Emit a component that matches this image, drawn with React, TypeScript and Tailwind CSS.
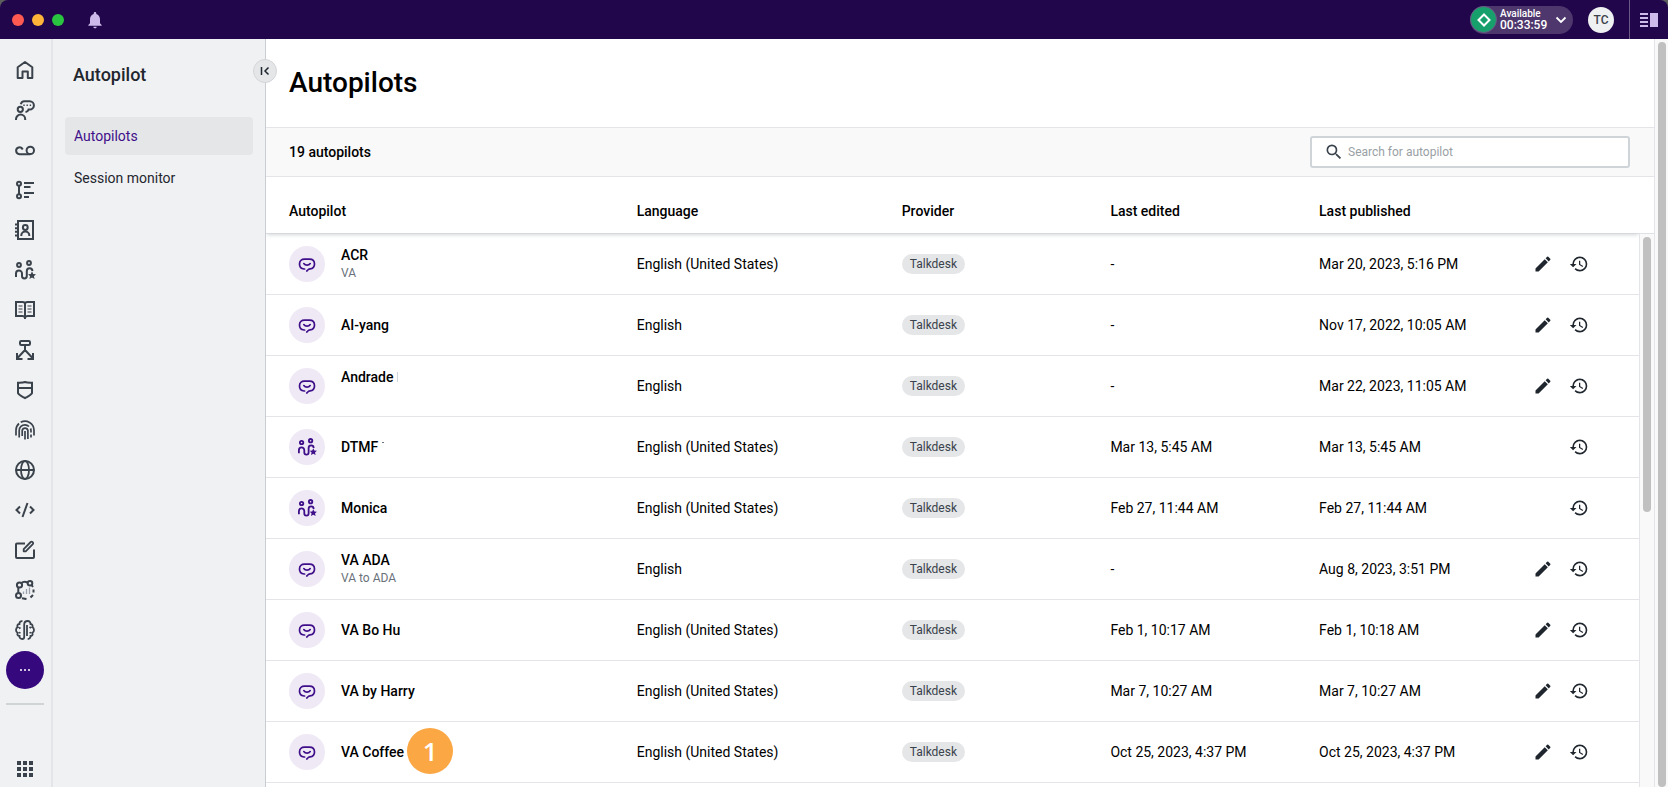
import type { ReactNode } from "react";
import { MdApps, MdEdit, MdHistory, MdNotifications, MdSearch } from "react-icons/md";

type Row = {
  name: string;
  sub?: string;
  kind: "va" | "trainer";
  language: string;
  edited: string;
  published: string;
  editable: boolean;
  trail?: ReactNode;
};

function StrokeIcon({ children, className = "size-5" }: { children: ReactNode; className?: string }) {
  return (
    <svg viewBox="0 0 20 20" className={className} fill="none" stroke="currentColor" strokeWidth="2" aria-hidden="true">
      {children}
    </svg>
  );
}

function TrainerIcon({ className }: { className?: string }) {
  return (
    <StrokeIcon className={className}>
      <circle cx="4" cy="5" r="1.900" />
      <circle cx="14" cy="3" r="1.900" />
      <path d="M1 17v-3.500a3 3 0 0 1 6 0V16a2.400 2.400 0 0 0 4.800 0v-5a2.800 2.800 0 0 1 5.600 0" />
      <path d="m17 11.300 1.200 2.700 2.800.3-2.100 1.900.7 2.800-2.600-1.500-2.600 1.500.7-2.800-2.100-1.900 2.800-.3z" fill="currentColor" stroke="none" />
    </StrokeIcon>
  );
}

function AssistantIcon() {
  return (
    <svg viewBox="0 0 18 16" className="h-4 w-[18px]" fill="none" stroke="currentColor" strokeWidth="1.700" strokeLinecap="round" aria-hidden="true">
      <path d="M6.600 13H6C3.200 12.800 1.500 11 1.500 8c0-3.200 2.200-4.900 5-4.900h5c2.800 0 5 1.700 5 4.900 0 2.800-1.900 4.600-4.500 4.900-1.700.2-2 1-3.200 2.100" />
      <path d="M5.800 7.600c1.500 2.100 4.900 2.100 6.400 0" />
    </svg>
  );
}

const railItems: { label: string; icon: ReactNode }[] = [
  { label: "Home", icon: <StrokeIcon><path d="M2.700 18V7.200L10 2l7.300 5.200V18h-4.500v-6.500H7.500V18z" strokeLinejoin="round" /></StrokeIcon> },
  {
    label: "Conversations",
    icon: (
      <StrokeIcon>
        <circle cx="5.300" cy="9.300" r="2.600" />
        <path d="M1 20v-.8a4.600 4.600 0 0 1 9.200 0v.8M5.800 4.300C6.200 2.400 7.500 1.200 9.300 1.200h5.400a4.200 4.200 0 0 1 0 8.400h-1.200c-.3 1.300-1.200 2.100-3 2.300" />
        <path d="M8.300 5.200h1.400M11.500 5.200h1.400M14.700 5.200h1.400" strokeWidth="1.500" />
      </StrokeIcon>
    ),
  },
  { label: "Voicemail", icon: <StrokeIcon><path d="M7.700 9.500a3.400 3.400 0 1 0-3.200 4.700h10.800" /><circle cx="15.300" cy="10.400" r="3.700" /></StrokeIcon> },
  { label: "Activities", icon: <StrokeIcon><circle cx="4" cy="3.700" r="2" /><circle cx="4" cy="16.300" r="2" /><path d="M4 5.700v8.600M9 3h10M9 7h6.500M9 13h10M9 17h5" /></StrokeIcon> },
  { label: "Contacts", icon: <StrokeIcon><path d="M3 1h15v18H3zM0 4.500h3M0 8.200h3M0 11.800h3M0 15.500h3M6.300 16v-.5a4 4 0 0 1 8 0v.5" /><circle cx="10.300" cy="7.500" r="2.400" /></StrokeIcon> },
  { label: "Agents", icon: <TrainerIcon className="size-5 overflow-visible" /> },
  {
    label: "Knowledge",
    icon: (
      <StrokeIcon>
        <path d="M10 17.500c-.7-1-1.500-1.500-2.500-1.500H1V2h6.500c1.300 0 2.500.8 2.500 2 0-1.200 1.200-2 2.500-2H19v14h-6.500c-1 0-1.800.5-2.500 1.500zM10 4v15" />
        <path d="M3.500 6h4M3.500 9h4M3.500 12h4M12.500 6h4M12.500 9h4M12.500 12h4" strokeWidth="1.200" />
      </StrokeIcon>
    ),
  },
  { label: "Routing", icon: <StrokeIcon><rect x="5" y="1" width="10" height="4" rx="1.200" /><path d="M10 5v5L2.500 18M10 10l7.500 8M2 13v6h5.500M18 13v6h-5.500" /></StrokeIcon> },
  { label: "Security", icon: <StrokeIcon><path d="M3 2.800c3-.2 5-.2 7-.8 2 .6 4 .6 7 .8v10.400c-1 2.200-4 3.200-7 4.800-3-1.600-6-2.600-7-4.800zM3 8h14" /></StrokeIcon> },
  {
    label: "Identity",
    icon: (
      <StrokeIcon>
        <path d="M1 15.500V10a9 9 0 0 1 3-6.500M5.700 2.300A9 9 0 0 1 19 10v5.500M4.200 17.500V10.500A5.800 5.800 0 0 1 10 4.800a5.800 5.800 0 0 1 4 1.700M15.500 8.500c.4.800.5 1.500.5 2.500v1.500M16 14.500v3M7.200 16v-5.500a2.900 2.900 0 0 1 5.700 0V19M10 11v8.500" strokeWidth="1.700" />
      </StrokeIcon>
    ),
  },
  { label: "Web", icon: <StrokeIcon><circle cx="10" cy="10" r="9" /><ellipse cx="10" cy="10" rx="4" ry="9" strokeWidth="1.800" /><path d="M1 10h18" /></StrokeIcon> },
  { label: "Developers", icon: <StrokeIcon><path d="M5 6.500 1.500 10 5 13.500M15 6.500l3.500 3.500-3.500 3.500M12.500 3l-5 14" /></StrokeIcon> },
  { label: "Compose", icon: <StrokeIcon><path d="M10 3.500H2a1 1 0 0 0-1 1V17a1 1 0 0 0 1 1h16a1 1 0 0 0 1-1V9.500" /><path d="m8.700 9.200 7-7.200c1.200-1.200 3.300.900 2.100 2.100l-7.100 7.200H8.700z" strokeWidth="1.800" strokeLinejoin="round" /></StrokeIcon> },
  {
    label: "Journeys",
    icon: (
      <StrokeIcon>
        <circle cx="4.500" cy="5" r="2.600" />
        <circle cx="15" cy="3.300" r="2.300" />
        <circle cx="3.500" cy="15.500" r="2.500" />
        <path d="M6.500 3C8 1.500 10.500 1.500 12.500 2.500M3.300 7.500V12.500M16.500 5l1.500 2M7 18.300l4.500.8M18.500 9.500v3M18 15l-2.500 2.500" />
        <path d="M8.500 14v-2.500M11.500 14V9M14.500 14V7.500" strokeWidth="1.300" className="text-gray-400" />
      </StrokeIcon>
    ),
  },
  {
    label: "Intelligence",
    icon: (
      <StrokeIcon>
        <path d="M7.500 1.200C5.500 1 4.300 2 4.500 4 2.300 4.200 1.800 5.700 2.700 7.200 1.300 7.800 1 9 1 10s.3 2.200 1.700 2.800C1.800 14.500 2.700 16 4.500 16c-.1 2 1 3 2.700 3 1.300 0 2-.8 2-2V4.500C9.200 2.300 10.500 1 12.700 1c1.800 0 2.900 1.200 2.800 3 1.800.2 2.700 1.700 1.800 3.200 1.400.6 1.700 1.800 1.700 2.800s-.3 2.200-1.700 2.800c.9 1.700 0 3.200-1.800 3.200.1 1.800-1 3-2.800 3M12 5v11M4 8.500l1.500-1M4 12.500l1.500.5M16 8l-1.500-1M16 12.500l-1.500.5" strokeWidth="1.800" />
      </StrokeIcon>
    ),
  },
];

const rows: Row[] = [
  { name: "ACR", sub: "VA", kind: "va", language: "English (United States)", edited: "-", published: "Mar 20, 2023, 5:16 PM", editable: true },
  { name: "AI-yang", kind: "va", language: "English", edited: "-", published: "Nov 17, 2022, 10:05 AM", editable: true },
  { name: "Andrade", sub: "\u00a0", kind: "va", language: "English", edited: "-", published: "Mar 22, 2023, 11:05 AM", editable: true, trail: <span className="ml-1 h-2.5 w-px bg-gray-300" /> },
  { name: "DTMF", kind: "trainer", language: "English (United States)", edited: "Mar 13, 5:45 AM", published: "Mar 13, 5:45 AM", editable: false, trail: <span className="mb-2 ml-1 h-px w-0.5 bg-gray-500" /> },
  { name: "Monica", kind: "trainer", language: "English (United States)", edited: "Feb 27, 11:44 AM", published: "Feb 27, 11:44 AM", editable: false },
  { name: "VA ADA", sub: "VA to ADA", kind: "va", language: "English", edited: "-", published: "Aug 8, 2023, 3:51 PM", editable: true },
  { name: "VA Bo Hu", kind: "va", language: "English (United States)", edited: "Feb 1, 10:17 AM", published: "Feb 1, 10:18 AM", editable: true },
  { name: "VA by Harry", kind: "va", language: "English (United States)", edited: "Mar 7, 10:27 AM", published: "Mar 7, 10:27 AM", editable: true },
  {
    name: "VA Coffee", kind: "va", language: "English (United States)", edited: "Oct 25, 2023, 4:37 PM", published: "Oct 25, 2023, 4:37 PM", editable: true,
    trail: <span className="absolute bottom-1/2 left-full ml-[3px] flex size-[46px] translate-y-[22px] items-center justify-center rounded-full bg-[#fba744] font-['Open_Sans',sans-serif] text-[26px] font-semibold text-white">1</span>,
  },
];

function TopBar() {
  return (
    <header className="flex h-[39px] shrink-0 items-center rounded-t-lg bg-[#22064b] pl-3 text-white">
      <div className="flex gap-2">
        <span className="size-3 rounded-full bg-[#ff5a52]" />
        <span className="size-3 rounded-full bg-[#fdb438]" />
        <span className="size-3 rounded-full bg-[#29c440]" />
      </div>
      <button type="button" aria-label="Notifications" className="ml-[21px] text-[#cdbaea]">
        <MdNotifications className="size-5" />
      </button>
      <button type="button" className="ml-auto flex h-7 w-[103px] items-center rounded-full bg-[#4d376d] pr-1.5">
        <span className="flex size-[27px] shrink-0 items-center justify-center rounded-full border border-[#6b5a86] bg-[#17a06b]">
          <svg viewBox="0 0 14 14" className="size-3.5" fill="none" stroke="currentColor" strokeWidth="2" aria-hidden="true">
            <path d="M7 1.500 12.500 7 7 12.500 1.500 7z" />
          </svg>
        </span>
        <span className="ml-[3px] flex flex-col text-left font-medium">
          <span className="text-[10px] leading-[11px]">Available</span>
          <span className="text-xs leading-3">00:33:59</span>
        </span>
        <svg viewBox="0 0 12 8" className="ml-auto h-2 w-3" fill="none" stroke="currentColor" strokeWidth="1.800" aria-hidden="true">
          <path d="m1.500 1.500 4.500 4.500 4.500-4.500" />
        </svg>
      </button>
      <button type="button" aria-label="Profile" className="ml-[15px] size-[26px] rounded-full bg-[#eff0f2] text-xs font-medium text-[#3a424b]">TC</button>
      <button type="button" aria-label="Toggle side panel" className="ml-[15px] flex h-full w-[39px] items-center justify-center border-l border-[#6b5a86] text-[#cdbaea]">
        <svg viewBox="0 0 18 14" className="h-3.5 w-[18px]" fill="currentColor" aria-hidden="true">
          <path d="M0 0h8v2H0zM0 4h8v2H0zM0 8h8v2H0zM0 12h8v2H0zM10 0h8v14h-8z" />
        </svg>
      </button>
    </header>
  );
}

function Rail() {
  return (
    <nav aria-label="Applications" className="flex w-[53px] shrink-0 flex-col items-center border-r-2 border-[#e3e5e8] bg-[#f0f1f3] pt-[11px] pr-px text-[#3a424b]">
      {railItems.map((item) => (
        <a key={item.label} href="#" aria-label={item.label} className="flex size-10 shrink-0 items-center justify-center">
          {item.icon}
        </a>
      ))}
      <button type="button" aria-label="More" className="mt-px flex size-[38px] shrink-0 items-center justify-center gap-0.5 rounded-full bg-[#35087e]">
        <span className="size-0.5 rounded-full bg-white" />
        <span className="size-0.5 rounded-full bg-white" />
        <span className="size-0.5 rounded-full bg-white" />
      </button>
      <hr className="mt-3.5 w-[38px] shrink-0 border-t-2 border-[#cfd4d6]" />
      <button type="button" aria-label="All apps" className="mt-auto mb-1.5 shrink-0">
        <MdApps className="size-6" />
      </button>
    </nav>
  );
}

function SidePanel() {
  return (
    <aside className="relative w-[213px] shrink-0 border-r border-[#c9cdd1] bg-[#f0f1f3] px-3 text-[#1f262e]">
      <h2 className="ml-2 pt-6 text-lg leading-6 font-medium">Autopilot</h2>
      <nav aria-label="Autopilot" className="mt-[30px] flex flex-col gap-1 text-sm">
        <a href="#" className="flex h-[38px] items-center rounded bg-[#e5e6e8] px-[9px] text-[#3f0f8a]">Autopilots</a>
        <a href="#" className="flex h-[38px] items-center rounded px-[9px]">Session monitor</a>
      </nav>
      <button type="button" aria-label="Collapse panel" className="absolute top-5 -right-3 z-10 flex size-6 items-center justify-center rounded-full border border-[#d3d6d9] bg-[#e5e6e8]">
        <svg viewBox="0 0 10 10" className="size-2.5" fill="none" stroke="currentColor" strokeWidth="1.500" aria-hidden="true">
          <path d="M1.500 1v8M8.500 1.500 5 5l3.500 3.500" />
        </svg>
      </button>
    </aside>
  );
}

function AutopilotRow({ row }: { row: Row }) {
  return (
    <tr className="h-[61px] border-b border-[#e3e5e8]">
      <td className="pl-[23px]">
        <div className="flex items-center gap-4">
          <span className="flex size-9 shrink-0 items-center justify-center rounded-full bg-[#efe9f6] text-[#3f0f8a]">
            {row.kind === "va" ? <AssistantIcon /> : <TrainerIcon className="size-[18px] overflow-visible" />}
          </span>
          <div>
            <div className="relative flex w-fit items-center leading-[18px] font-medium">
              {row.name}
              {row.trail}
            </div>
            {row.sub && <div className="text-xs leading-[18px] text-[#69717a]">{row.sub}</div>}
          </div>
        </div>
      </td>
      <td>{row.language}</td>
      <td>
        <span className="inline-flex h-5 items-center rounded-full bg-[#e5e6e8] px-2 align-middle text-xs text-[#3a424b]">Talkdesk</span>
      </td>
      <td>{row.edited}</td>
      <td>{row.published}</td>
      <td className="pr-[50px]">
        <div className="flex justify-end gap-4 text-[#1f262e]">
          {row.editable && (
            <button type="button" aria-label={`Edit ${row.name}`}>
              <MdEdit className="size-5" />
            </button>
          )}
          <button type="button" aria-label={`History of ${row.name}`}>
            <MdHistory className="size-5" />
          </button>
        </div>
      </td>
    </tr>
  );
}

export default function App() {
  return (
    <div className="flex h-screen flex-col overflow-hidden bg-[#5c605c] font-[Roboto,'Liberation_Sans',sans-serif] text-sm text-black">
      <TopBar />
      <div className="flex min-h-0 flex-1 bg-white">
        <Rail />
        <SidePanel />
        <main className="flex min-w-0 flex-1 flex-col">
          <h1 className="flex h-[88px] shrink-0 items-center pl-[23px] text-[28px] font-medium">Autopilots</h1>
          <div className="flex h-[50px] shrink-0 items-center justify-between border-y border-[#e3e5e8] bg-[#f9f9f9] pr-6 pl-[23px]">
            <p className="font-medium">19 autopilots</p>
            <label className="flex h-8 w-80 items-center gap-1 rounded-[3px] border-2 border-[#cfd4d9] bg-white pl-3">
              <MdSearch className="size-5 text-[#3a424b]" />
              <input type="search" aria-label="Search for autopilot" placeholder="Search for autopilot" className="min-w-0 flex-1 text-xs outline-none placeholder:text-[#9a9fa5]" />
            </label>
          </div>
          <div className="flex min-h-0 flex-1 overflow-hidden">
            <div className="min-w-0 flex-1">
              <table className="w-full table-fixed border-collapse text-left">
                <thead className="relative shadow-[0_3px_4px_-1px_#d3d7da]">
                  <tr className="h-14 border-b border-[#dfe2e5]">
                    <th scope="col" className="w-[27%] pt-[13px] pl-[23px] font-medium">Autopilot</th>
                    <th scope="col" className="w-[19.3%] pt-[13px] font-medium">Language</th>
                    <th scope="col" className="w-[15.2%] pt-[13px] font-medium">Provider</th>
                    <th scope="col" className="w-[15.2%] pt-[13px] font-medium">Last edited</th>
                    <th scope="col" className="pt-[13px] font-medium">Last published</th>
                    <th scope="col" className="w-[10%]" aria-label="Actions" />
                  </tr>
                </thead>
                <tbody>
                  {rows.map((row) => (
                    <AutopilotRow key={row.name} row={row} />
                  ))}
                </tbody>
              </table>
            </div>
            <div className="relative flex w-[15px] shrink-0 flex-col bg-white" aria-hidden="true">
              <div className="h-[57px] shrink-0 border-b border-[#dfe2e5]" />
              <div className="flex-1 border-l border-[#e3e5e8] bg-[#f9f9f9] px-[3px] pt-[3px]">
                <div className="h-1/2 rounded-full bg-[#c0c0c0]" />
              </div>
            </div>
          </div>
        </main>
        <div className="w-3.5 shrink-0 border-l border-[#e3e5e8] bg-[#f9f9f9] pt-[3px] pr-0.5 pl-[3px]" aria-hidden="true">
          <div className="h-full rounded-full bg-[#c0c0c0]" />
        </div>
      </div>
    </div>
  );
}
